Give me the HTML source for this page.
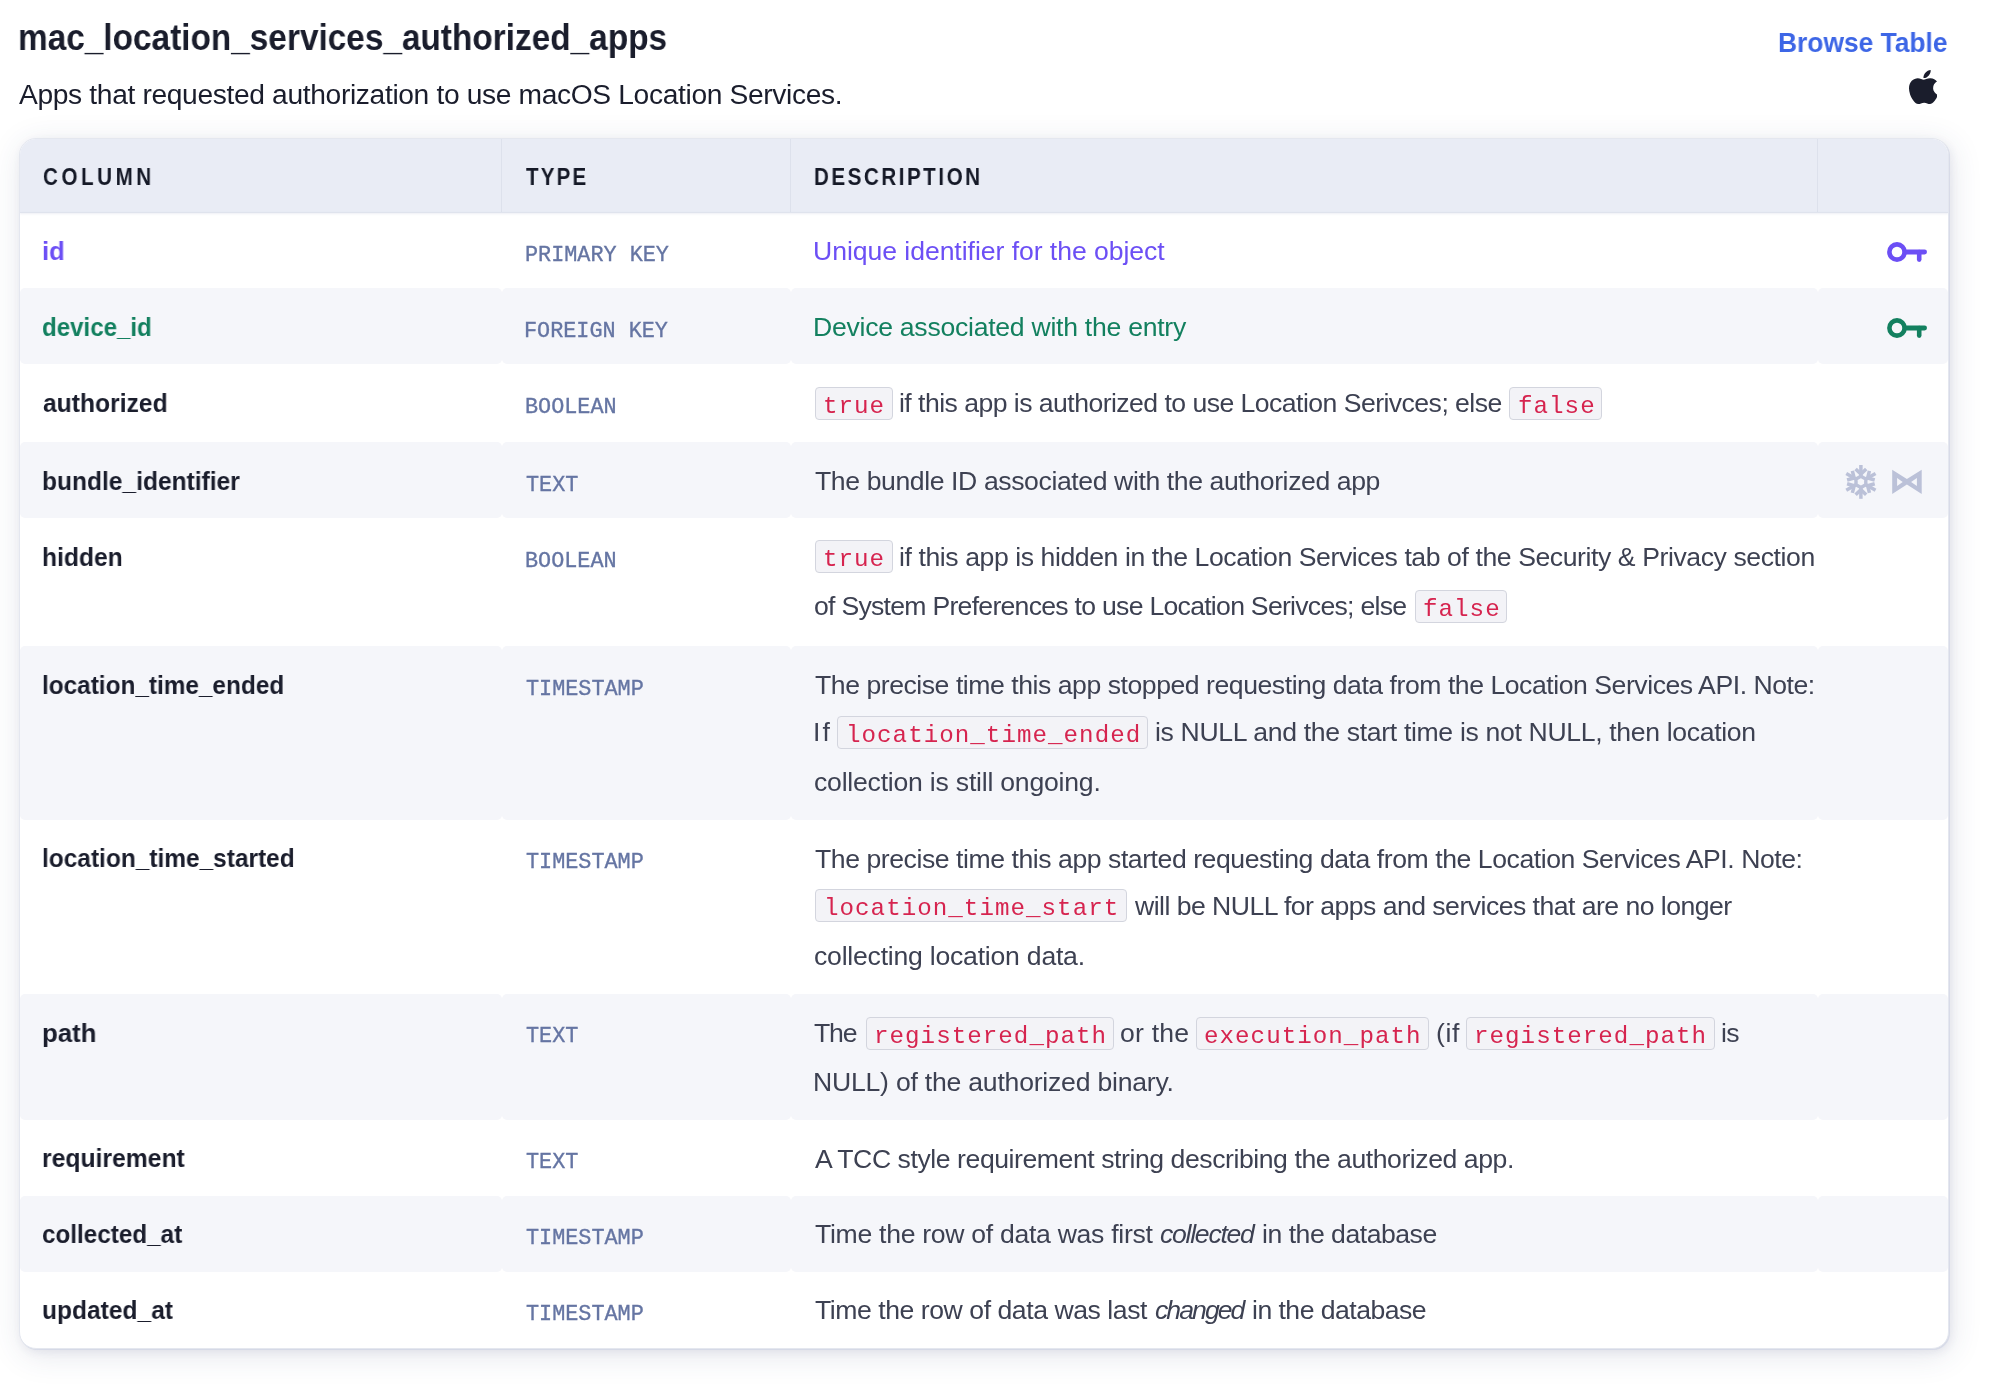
<!DOCTYPE html>
<html><head><meta charset="utf-8">
<style>
html,body{margin:0;padding:0;background:#fff;width:1990px;height:1384px;overflow:hidden;position:relative}
body{font-family:"Liberation Sans",sans-serif}
.t{position:absolute;white-space:nowrap;font-family:"Liberation Sans",sans-serif;will-change:transform}
.ty{font-family:"Liberation Mono",monospace;font-size:21.8px;line-height:21.8px;color:#6575a3;-webkit-text-stroke:0.35px #6575a3}
.code{font-family:"Liberation Mono",monospace;font-size:24.2px;line-height:24.2px;color:#d6244f}
.pill{position:absolute;box-sizing:border-box;background:#f3f3f7;border:1.4px solid #d3d5de;border-radius:4px}
#tbl{position:absolute;left:19px;top:138px;width:1930px;height:1211px;box-sizing:border-box;border:1px solid #e4e7ef;border-radius:17px;background:#fff;overflow:hidden;
 box-shadow:1px 1px 0 rgba(200,205,225,.5),2px 3px 8px rgba(60,70,120,.08),2px 6px 32px rgba(50,60,110,.13)}
.hd{position:absolute;left:0;top:0;width:1928px;height:73px;background:#e9ecf5}
.hl{position:absolute;top:0;height:73px;width:1px;background:#dde1ec}
.hb{position:absolute;left:0;top:73px;width:1928px;height:1px;background:#dfe3ed;box-shadow:0 1px 2px rgba(200,205,222,.45)}
.c{position:absolute;background:#f5f6fa;border-radius:5px}
</style></head><body>
<div id="tbl">
 <div class="hd"></div>
 <div class="hl" style="left:481px"></div>
 <div class="hl" style="left:770px"></div>
 <div class="hl" style="left:1797px"></div>
 <div class="hb"></div>
 <!-- gray rows: page y -> minus 140 ; page x minus 20 -->
 <div class="c" style="left:0;top:149px;width:482px;height:76px"></div>
 <div class="c" style="left:482px;top:149px;width:289px;height:76px"></div>
 <div class="c" style="left:771px;top:149px;width:1027px;height:76px"></div>
 <div class="c" style="left:1798px;top:149px;width:130px;height:76px"></div>

 <div class="c" style="left:0;top:303px;width:482px;height:76px"></div>
 <div class="c" style="left:482px;top:303px;width:289px;height:76px"></div>
 <div class="c" style="left:771px;top:303px;width:1027px;height:76px"></div>
 <div class="c" style="left:1798px;top:303px;width:130px;height:76px"></div>

 <div class="c" style="left:0;top:507px;width:482px;height:174px"></div>
 <div class="c" style="left:482px;top:507px;width:289px;height:174px"></div>
 <div class="c" style="left:771px;top:507px;width:1027px;height:174px"></div>
 <div class="c" style="left:1798px;top:507px;width:130px;height:174px"></div>

 <div class="c" style="left:0;top:855px;width:482px;height:126px"></div>
 <div class="c" style="left:482px;top:855px;width:289px;height:126px"></div>
 <div class="c" style="left:771px;top:855px;width:1027px;height:126px"></div>
 <div class="c" style="left:1798px;top:855px;width:130px;height:126px"></div>

 <div class="c" style="left:0;top:1057px;width:482px;height:76px"></div>
 <div class="c" style="left:482px;top:1057px;width:289px;height:76px"></div>
 <div class="c" style="left:771px;top:1057px;width:1027px;height:76px"></div>
 <div class="c" style="left:1798px;top:1057px;width:130px;height:76px"></div>
</div>

<!-- apple -->
<svg style="position:absolute;left:1909px;top:70px" width="28" height="34" viewBox="4 32 365 448" preserveAspectRatio="none">
<path fill="#1a1d2c" d="M318.7 268.7c-.2-36.7 16.4-64.4 50-84.8-18.8-26.9-47.2-41.7-84.7-44.6-35.5-2.8-74.3 20.7-88.5 20.7-15 0-49.4-19.7-76.4-19.7C63.3 141.2 4 184.8 4 273.5q0 39.3 14.4 81.2c12.8 36.7 59 126.7 107.2 125.2 25.2-.6 43-17.9 75.8-17.9 31.8 0 48.3 17.9 76.4 17.9 48.6-.7 90.4-82.5 102.6-119.3-65.2-30.7-61.7-90-61.7-91.9zm-56.6-164.2c27.3-32.4 24.8-61.9 24-72.5-24.1 1.4-52 16.4-67.9 34.9-17.5 19.8-27.8 44.3-25.6 71.9 26.1 2 49.9-11.4 69.5-34.3z"/>
</svg>

<!-- keys -->
<svg style="position:absolute;left:1880px;top:236px" width="56" height="32" viewBox="0 0 56 32">
 <g fill="none" stroke="#6c4ff5" stroke-linecap="round">
  <circle cx="17" cy="16" r="7.6" stroke-width="4.6"/>
  <path d="M25 16H44.6" stroke-width="4.8"/>
  <path d="M39.2 16V23.6" stroke-width="4.6"/>
 </g>
</svg>
<svg style="position:absolute;left:1880px;top:312px" width="56" height="32" viewBox="0 0 56 32">
 <g fill="none" stroke="#13805f" stroke-linecap="round">
  <circle cx="17" cy="16" r="7.6" stroke-width="4.6"/>
  <path d="M25 16H44.6" stroke-width="4.8"/>
  <path d="M39.2 16V23.6" stroke-width="4.6"/>
 </g>
</svg>

<!-- snowflake -->
<svg style="position:absolute;left:1841px;top:462px" width="40" height="40" viewBox="-19.9 -19.9 40 40">
 <defs><g id="arm"><path d="M0 -5.4V-16.9" stroke-width="3.5"/><path d="M-5.3 -12.9L0 -7.8L5.3 -12.9" stroke-width="3.5"/></g></defs>
 <g stroke="#bbc1d8" fill="none">
  <use href="#arm"/>
  <use href="#arm" transform="rotate(60)"/>
  <use href="#arm" transform="rotate(120)"/>
  <use href="#arm" transform="rotate(180)"/>
  <use href="#arm" transform="rotate(240)"/>
  <use href="#arm" transform="rotate(300)"/>
  <path d="M0 -5.66L4.9 -2.83L4.9 2.83L0 5.66L-4.9 2.83L-4.9 -2.83Z" stroke-width="3.4"/>
 </g>
</svg>

<!-- bowtie join -->
<svg style="position:absolute;left:1888px;top:465px" width="38" height="34" viewBox="0 0 38 34">
 <path fill="#bbc1d8" fill-rule="evenodd" d="M4.2 4.8L18.9 14.1L33.7 4.8L33.7 28.9L18.9 19.4L4.2 28.9Z M9.1 12.9L9.1 20.9L14.7 16.95Z M28.9 12.9L28.9 20.9L23.1 16.95Z"/>
</svg>

<div class="t" style="left:18.17px;top:20.20px;font-size:36.5px;line-height:36.5px;color:#1a1d2c;transform:scaleX(0.9141);transform-origin:0 0;font-weight:700">mac_location_services_authorized_apps</div>
<div class="t" style="left:19.40px;top:80.00px;font-size:28.2px;line-height:28.2px;color:#1a1d2c;letter-spacing:-0.351px">Apps that requested authorization to use macOS Location Services.</div>
<div class="t" style="left:1777.97px;top:28.20px;font-size:28.4px;line-height:28.4px;color:#3d66e6;transform:scaleX(0.9286);transform-origin:0 0;font-weight:700">Browse Table</div>
<div class="t" style="left:43.10px;top:166.10px;font-size:23.4px;line-height:23.4px;color:#151927;letter-spacing:4.036px;transform:scaleX(0.88);transform-origin:0 0;font-weight:700">COLUMN</div>
<div class="t" style="left:525.70px;top:166.10px;font-size:23.4px;line-height:23.4px;color:#151927;letter-spacing:2.412px;transform:scaleX(0.88);transform-origin:0 0;font-weight:700">TYPE</div>
<div class="t" style="left:813.82px;top:166.10px;font-size:23.4px;line-height:23.4px;color:#151927;letter-spacing:2.875px;transform:scaleX(0.88);transform-origin:0 0;font-weight:700">DESCRIPTION</div>
<div class="t" style="left:42.12px;top:238.10px;font-size:26.2px;line-height:26.2px;color:#6c4ff5;transform:scaleX(0.9776);transform-origin:0 0;font-weight:700">id</div>
<div class="t" style="left:42.18px;top:314.00px;font-size:26.2px;line-height:26.2px;color:#13805f;transform:scaleX(0.9202);transform-origin:0 0;font-weight:700">device_id</div>
<div class="t" style="left:43.10px;top:390.00px;font-size:26.2px;line-height:26.2px;color:#1a1d2c;transform:scaleX(0.9414);transform-origin:0 0;font-weight:700">authorized</div>
<div class="t" style="left:42.16px;top:467.80px;font-size:26.2px;line-height:26.2px;color:#1a1d2c;transform:scaleX(0.9372);transform-origin:0 0;font-weight:700">bundle_identifier</div>
<div class="t" style="left:42.16px;top:544.00px;font-size:26.2px;line-height:26.2px;color:#1a1d2c;transform:scaleX(0.9412);transform-origin:0 0;font-weight:700">hidden</div>
<div class="t" style="left:42.17px;top:671.80px;font-size:26.2px;line-height:26.2px;color:#1a1d2c;transform:scaleX(0.9296);transform-origin:0 0;font-weight:700">location_time_ended</div>
<div class="t" style="left:42.17px;top:844.90px;font-size:26.2px;line-height:26.2px;color:#1a1d2c;transform:scaleX(0.9334);transform-origin:0 0;font-weight:700">location_time_started</div>
<div class="t" style="left:42.11px;top:1019.50px;font-size:26.2px;line-height:26.2px;color:#1a1d2c;transform:scaleX(0.9853);transform-origin:0 0;font-weight:700">path</div>
<div class="t" style="left:42.16px;top:1145.40px;font-size:26.2px;line-height:26.2px;color:#1a1d2c;transform:scaleX(0.9434);transform-origin:0 0;font-weight:700">requirement</div>
<div class="t" style="left:42.17px;top:1221.00px;font-size:26.2px;line-height:26.2px;color:#1a1d2c;transform:scaleX(0.9260);transform-origin:0 0;font-weight:700">collected_at</div>
<div class="t" style="left:42.16px;top:1296.70px;font-size:26.2px;line-height:26.2px;color:#1a1d2c;transform:scaleX(0.9377);transform-origin:0 0;font-weight:700">updated_at</div>
<div class="t" style="left:813.40px;top:238.10px;font-size:26.6px;line-height:26.6px;color:#6c4ff5;letter-spacing:-0.052px">Unique identifier for the object</div>
<div class="t" style="left:812.90px;top:314.00px;font-size:26.6px;line-height:26.6px;color:#13805f;letter-spacing:-0.263px">Device associated with the entry</div>
<div class="t" style="left:899.30px;top:390.00px;font-size:26.6px;line-height:26.6px;color:#3d4152;letter-spacing:-0.535px">if this app is authorized to use Location Serivces; else</div>
<div class="t" style="left:814.90px;top:467.80px;font-size:26.6px;line-height:26.6px;color:#3d4152;letter-spacing:-0.395px">The bundle ID associated with the authorized app</div>
<div class="t" style="left:899.00px;top:543.80px;font-size:26.6px;line-height:26.6px;color:#3d4152;letter-spacing:-0.413px">if this app is hidden in the Location Services tab of the Security &amp; Privacy section</div>
<div class="t" style="left:814.10px;top:593.00px;font-size:26.6px;line-height:26.6px;color:#3d4152;letter-spacing:-0.718px">of System Preferences to use Location Serivces; else</div>
<div class="t" style="left:814.60px;top:672.00px;font-size:26.6px;line-height:26.6px;color:#3d4152;letter-spacing:-0.453px">The precise time this app stopped requesting data from the Location Services API. Note:</div>
<div class="t" style="left:812.90px;top:719.00px;font-size:26.6px;line-height:26.6px;color:#3d4152;letter-spacing:2.111px">If</div>
<div class="t" style="left:1155.10px;top:719.00px;font-size:26.6px;line-height:26.6px;color:#3d4152;letter-spacing:-0.332px">is NULL and the start time is not NULL, then location</div>
<div class="t" style="left:813.90px;top:768.60px;font-size:26.6px;line-height:26.6px;color:#3d4152;letter-spacing:-0.218px">collection is still ongoing.</div>
<div class="t" style="left:814.60px;top:845.70px;font-size:26.6px;line-height:26.6px;color:#3d4152;letter-spacing:-0.441px">The precise time this app started requesting data from the Location Services API. Note:</div>
<div class="t" style="left:1134.90px;top:892.70px;font-size:26.6px;line-height:26.6px;color:#3d4152;letter-spacing:-0.522px">will be NULL for apps and services that are no longer</div>
<div class="t" style="left:813.90px;top:942.90px;font-size:26.6px;line-height:26.6px;color:#3d4152;letter-spacing:-0.224px">collecting location data.</div>
<div class="t" style="left:814.40px;top:1020.40px;font-size:26.6px;line-height:26.6px;color:#3d4152;letter-spacing:-1.167px">The</div>
<div class="t" style="left:1120.40px;top:1020.40px;font-size:26.6px;line-height:26.6px;color:#3d4152;letter-spacing:0.217px">or the</div>
<div class="t" style="left:1435.50px;top:1020.40px;font-size:26.6px;line-height:26.6px;color:#3d4152;letter-spacing:0.668px">(if</div>
<div class="t" style="left:1720.70px;top:1020.40px;font-size:26.6px;line-height:26.6px;color:#3d4152;letter-spacing:-0.608px">is</div>
<div class="t" style="left:812.90px;top:1069.00px;font-size:26.6px;line-height:26.6px;color:#3d4152;letter-spacing:-0.223px">NULL) of the authorized binary.</div>
<div class="t" style="left:814.90px;top:1145.60px;font-size:26.6px;line-height:26.6px;color:#3d4152;letter-spacing:-0.433px">A TCC style requirement string describing the authorized app.</div>
<div class="t" style="left:814.90px;top:1221.20px;font-size:26.6px;line-height:26.6px;color:#3d4152;letter-spacing:-0.291px">Time the row of data was first</div>
<div class="t" style="left:1160.20px;top:1221.20px;font-size:26.6px;line-height:26.6px;color:#3d4152;letter-spacing:-1.259px;font-style:italic">collected</div>
<div class="t" style="left:1262.00px;top:1221.20px;font-size:26.6px;line-height:26.6px;color:#3d4152;letter-spacing:-0.477px">in the database</div>
<div class="t" style="left:814.90px;top:1297.00px;font-size:26.6px;line-height:26.6px;color:#3d4152;letter-spacing:-0.446px">Time the row of data was last</div>
<div class="t" style="left:1154.70px;top:1297.00px;font-size:26.6px;line-height:26.6px;color:#3d4152;letter-spacing:-1.941px;font-style:italic">changed</div>
<div class="t" style="left:1252.10px;top:1297.00px;font-size:26.6px;line-height:26.6px;color:#3d4152;letter-spacing:-0.527px">in the database</div>
<div class="t ty" style="left:525.30px;top:244.90px">PRIMARY KEY</div>
<div class="t ty" style="left:524.30px;top:320.80px">FOREIGN KEY</div>
<div class="t ty" style="left:525.30px;top:396.80px">BOOLEAN</div>
<div class="t ty" style="left:526.30px;top:474.60px">TEXT</div>
<div class="t ty" style="left:525.30px;top:550.80px">BOOLEAN</div>
<div class="t ty" style="left:526.30px;top:678.60px">TIMESTAMP</div>
<div class="t ty" style="left:526.30px;top:851.70px">TIMESTAMP</div>
<div class="t ty" style="left:526.30px;top:1026.30px">TEXT</div>
<div class="t ty" style="left:526.30px;top:1152.20px">TEXT</div>
<div class="t ty" style="left:526.30px;top:1227.80px">TIMESTAMP</div>
<div class="t ty" style="left:526.30px;top:1303.50px">TIMESTAMP</div>
<div class="pill" style="left:815.20px;top:387.00px;width:77.70px;height:33px"></div>
<div class="t code" style="left:823.48px;top:394.50px;letter-spacing:1.025px">true</div>
<div class="pill" style="left:1509.40px;top:387.00px;width:93.10px;height:33px"></div>
<div class="t code" style="left:1517.61px;top:394.50px;letter-spacing:1.025px">false</div>
<div class="pill" style="left:815.20px;top:540.00px;width:77.60px;height:33px"></div>
<div class="t code" style="left:823.43px;top:548.30px;letter-spacing:1.025px">true</div>
<div class="pill" style="left:1414.50px;top:590.00px;width:92.70px;height:33px"></div>
<div class="t code" style="left:1422.51px;top:597.50px;letter-spacing:1.025px">false</div>
<div class="pill" style="left:837.40px;top:716.00px;width:310.90px;height:33px"></div>
<div class="t code" style="left:845.73px;top:723.50px;letter-spacing:1.025px">location_time_ended</div>
<div class="pill" style="left:815.20px;top:889.00px;width:311.40px;height:33px"></div>
<div class="t code" style="left:823.78px;top:897.20px;letter-spacing:1.025px">location_time_start</div>
<div class="pill" style="left:865.60px;top:1017.00px;width:248.40px;height:33px"></div>
<div class="t code" style="left:873.76px;top:1024.90px;letter-spacing:1.025px">registered_path</div>
<div class="pill" style="left:1196.30px;top:1017.00px;width:232.80px;height:33px"></div>
<div class="t code" style="left:1204.43px;top:1024.90px;letter-spacing:1.025px">execution_path</div>
<div class="pill" style="left:1465.50px;top:1017.00px;width:249.80px;height:33px"></div>
<div class="t code" style="left:1474.36px;top:1024.90px;letter-spacing:1.025px">registered_path</div>
</body></html>
